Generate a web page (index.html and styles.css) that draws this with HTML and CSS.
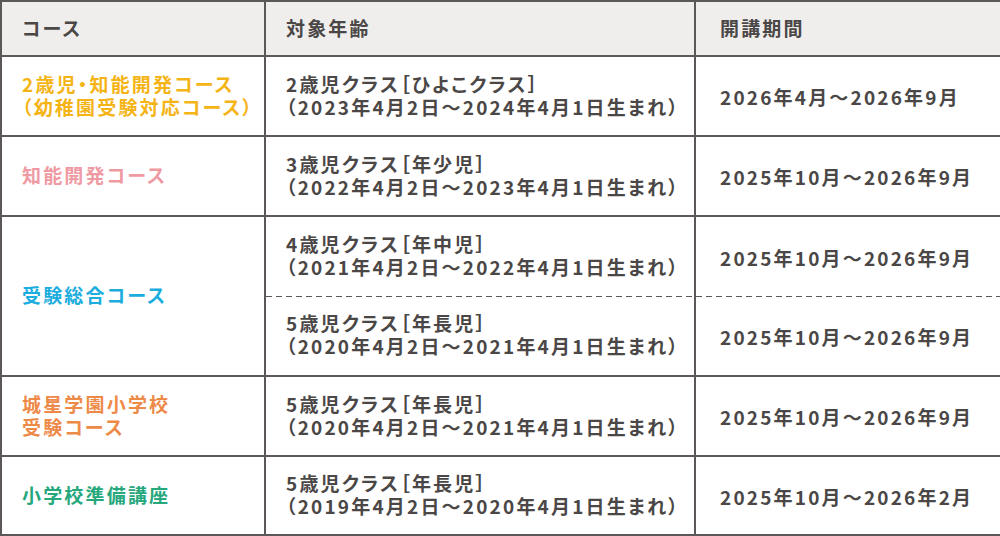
FILE: index.html
```html
<!DOCTYPE html>
<html lang="ja">
<head>
<meta charset="utf-8">
<title>コース一覧</title>
<link rel="stylesheet" href="styles.css">
</head>
<body>
<table class="course-table">
  <colgroup>
    <col class="col-course">
    <col class="col-age">
    <col class="col-period">
  </colgroup>
  <thead>
    <tr class="head-row">
      <th class="cell-course">コース</th>
      <th class="cell-age">対象年齢</th>
      <th class="cell-period">開講期間</th>
    </tr>
  </thead>
  <tbody>
    <tr class="row">
      <td class="cell-course c-yellow">2歳児・知能開発コース<br>（幼稚園受験対応コース）</td>
      <td class="cell-age">2歳児クラス［ひよこクラス］<br>（2023年4月2日～2024年4月1日生まれ）</td>
      <td class="cell-period">2026年4月～2026年9月</td>
    </tr>
    <tr class="row">
      <td class="cell-course c-pink">知能開発コース</td>
      <td class="cell-age">3歳児クラス［年少児］<br>（2022年4月2日～2023年4月1日生まれ）</td>
      <td class="cell-period">2025年10月～2026年9月</td>
    </tr>
    <tr class="row row-split-top">
      <td class="cell-course c-cyan" rowspan="2">受験総合コース</td>
      <td class="cell-age">4歳児クラス［年中児］<br>（2021年4月2日～2022年4月1日生まれ）</td>
      <td class="cell-period">2025年10月～2026年9月</td>
    </tr>
    <tr class="row row-split-bottom">
      <td class="cell-age dashed">5歳児クラス［年長児］<br>（2020年4月2日～2021年4月1日生まれ）</td>
      <td class="cell-period dashed">2025年10月～2026年9月</td>
    </tr>
    <tr class="row">
      <td class="cell-course c-orange">城星学園小学校<br>受験コース</td>
      <td class="cell-age">5歳児クラス［年長児］<br>（2020年4月2日～2021年4月1日生まれ）</td>
      <td class="cell-period">2025年10月～2026年9月</td>
    </tr>
    <tr class="row row-last">
      <td class="cell-course c-green">小学校準備講座</td>
      <td class="cell-age">5歳児クラス［年長児］<br>（2019年4月2日～2020年4月1日生まれ）</td>
      <td class="cell-period">2025年10月～2026年2月</td>
    </tr>
  </tbody>
</table>
</body>
</html>
```

FILE: styles.css
```css
html, body {
  margin: 0;
  padding: 0;
  background: #ffffff;
}

body {
  font-family: "Noto Sans CJK JP", "Noto Sans", sans-serif;
  font-weight: 700;
  color: #4a4746;
}

.course-table {
  width: 1000px;
  table-layout: fixed;
  border-collapse: collapse;
  border: 2px solid #5b5857;
}

.col-course { width: 264px; }
.col-age { width: 430px; }
.col-period { width: 306px; }

.course-table th,
.course-table td {
  border: 2px solid #5b5857;
  font-size: 19px;
  line-height: 23px;
  letter-spacing: 0.115em;
  font-feature-settings: "palt";
  text-align: left;
  vertical-align: middle;
  padding: 0 0 3px 0;
  white-space: nowrap;
}

.head-row { height: 55px; }
.head-row th {
  background: #efeeec;
  font-weight: 700;
}

.row { height: 80px; }
.row-last { height: 79px; }

.course-table .cell-course { padding-left: 20px; }
.course-table .cell-age { padding-left: 20px; }
.course-table .cell-period { padding-left: 24px; padding-top: 1px; padding-bottom: 0; }
.course-table th.cell-period { padding-top: 0; padding-bottom: 3px; }

.course-table .row-split-top td.cell-age,
.course-table .row-split-top td.cell-period {
  border-bottom: none;
}

.course-table td.dashed {
  border-top: none;
  background-image: linear-gradient(to right, #5b5857 0 6px, transparent 6px 10px);
  background-size: 10px 1px;
  background-repeat: repeat-x;
  background-position: 0 0;
}

.c-yellow { color: #f5b416; }
.c-pink { color: #ef9aa3; }
.c-cyan { color: #1badde; }
.c-orange { color: #ee8a48; }
.c-green { color: #26a77c; }
```
